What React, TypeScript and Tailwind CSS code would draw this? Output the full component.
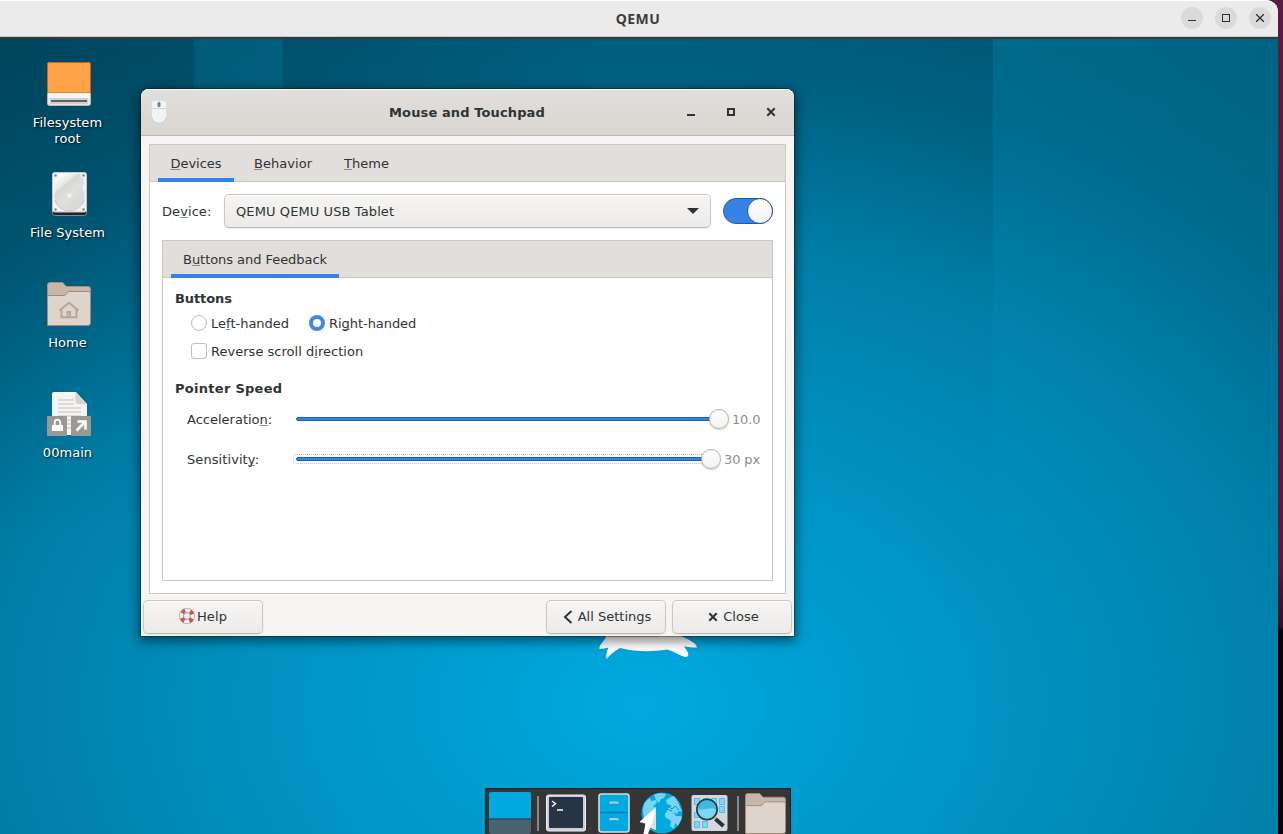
import React from "react";

function U({ children }: { children: React.ReactNode }) {
  return (
    <span className="underline decoration-[#8b8e8f] decoration-1 underline-offset-[1px] [text-decoration-skip-ink:none]">
      {children}
    </span>
  );
}

function DriveIcon() {
  return (
    <svg width="44" height="44" viewBox="0 0 44 44">
      <rect x="0.5" y="0.5" width="43" height="43" rx="2" fill="#e9e7e4" stroke="#b9b5b0" />
      <path d="M.5 31V2.500a2 2 0 0 1 2-2h39a2 2 0 0 1 2 2V31z" fill="#ffa348" stroke="#d4600f" />
      <rect x="1" y="31" width="42" height="5" fill="#f6f5f4" />
      <rect x="3" y="36" width="38" height="6" fill="#d3d0cc" />
      <rect x="4" y="38" width="36" height="2" fill="#5e5c6e" />
    </svg>
  );
}

function DiskIcon() {
  return (
    <svg width="44" height="44" viewBox="0 0 44 44">
      <defs>
        <linearGradient id="disk" x1="0" y1="0" x2="0.7" y2="1">
          <stop offset="0.1" stopColor="#fcfcfc" />
          <stop offset="0.32" stopColor="#e9e9e7" />
          <stop offset="0.38" stopColor="#d6d6d2" />
          <stop offset="0.6" stopColor="#dfdfdc" />
          <stop offset="1" stopColor="#d8d8d4" />
        </linearGradient>
      </defs>
      <rect x="5.5" y="4" width="34" height="39.5" rx="2" fill="#241f31" stroke="#8a8782" />
      <rect x="5.5" y="0.5" width="34" height="39.500" rx="2" fill="#f1f1ef" stroke="#c9c7c3" />
      <path d="M12 2h21c0 4 4 4 4 8s-2 4-1 7a15 14.500 0 1 1-27 0c1-3-1-3-1-7s4-4 4-8z" fill="url(#disk)" />
      <path d="M8 28a15 14.500 0 0 0 29 0" fill="none" stroke="#c0c0bb" />
      <circle cx="22.500" cy="23.500" r="2.200" fill="#f3f3f1" />
      <g fill="#888"><circle cx="8.500" cy="3.500" r="1.200" /><circle cx="36.500" cy="3.500" r="1.200" /><circle cx="8.500" cy="37.500" r="1.200" /><circle cx="36.500" cy="37.500" r="1.200" /></g>
    </svg>
  );
}

function FolderIcon({ home = false, className = "" }: { home?: boolean; className?: string }) {
  return (
    <svg width="44" height="44" viewBox="0 0 44 44" className={className}>
      <path d="M.5 42V3a2.500 2.500 0 0 1 2.500-2.500h12c2 0 3 4 5 4h21A2.500 2.500 0 0 1 43.500 7v34z" fill="#c8b7a9" stroke="#a58f80" />
      <path d="M.5 43.500V15a1.500 1.500 0 0 1 1.500-1.500h15c2 0 3-4 5-4h19.500a2 2 0 0 1 2 2V41a2.500 2.500 0 0 1-2.500 2.500z" fill="#ded4cb" stroke="#a08a7b" />
      {home && (
        <path d="M12.500 28.500l9.500-7.800 9.500 7.800M14.500 27v8.300h15V27M20.500 35v-5h2.500v5" fill="none" stroke="#b8a597" strokeWidth="1.900" />
      )}
    </svg>
  );
}

function DocIcon() {
  return (
    <svg width="44" height="44" viewBox="0 0 44 44">
      <path d="M5 43V2a2 2 0 0 1 2-2h22l11 12v31z" fill="#f6f5f4" />
      <path d="M28.500.500L39.500 12h-9a2 2 0 0 1-2-2z" fill="#d6d3cf" />
      <path d="M11 8h16M11 12h16M11 16h23M11 20h23M11 24h23M11 28h23M11 32h23M11 36h23" stroke="#d3d1ce" strokeWidth="1.600" />
      <rect x="0" y="24" width="20" height="20" rx="1" fill="#9a9996" />
      <rect x="24" y="24" width="20" height="20" rx="1" fill="#9a9996" />
      <rect x="5" y="33" width="11" height="6" rx="0.500" fill="#fff" />
      <path d="M7.700 33v-2.500a2.800 2.800 0 0 1 5.600 0V33" fill="none" stroke="#fff" strokeWidth="1.800" />
      <path d="M29.500 38.500l8-8M30.500 29.500h8v8" fill="none" stroke="#fff" strokeWidth="2.600" />
    </svg>
  );
}

function DesktopItem({ icon, children }: { icon: React.ReactNode; children: React.ReactNode }) {
  return (
    <div className="flex h-[110px] w-[110px] flex-col items-center text-center">
      <div className="ml-[3px] h-[44px]">{icon}</div>
      <div className="ml-px mt-[9px] text-[13px] leading-[16px] tracking-[0.05px] text-white [text-shadow:1px_1px_2px_rgba(0,0,0,0.9)]">{children}</div>
    </div>
  );
}

function MouseIcon() {
  return (
    <svg width="16" height="24" viewBox="0 0 16 24">
      <path d="M.5 3a2.500 2.500 0 0 1 2.500-2.500h10A2.500 2.500 0 0 1 15.500 3v13a7.500 7 0 0 1-15 0z" fill="#f1f3f5" stroke="#dce0e4" />
      <path d="M.5 8.500h15M8 .5v8" stroke="#d0d6db" fill="none" />
      <path d="M1 18a7 6 0 0 0 14 0" stroke="#c4cdd5" fill="none" />
      <rect x="6.500" y="2" width="3" height="5" rx="1.500" fill="#70808b" />
    </svg>
  );
}

function WmIcon({ kind }: { kind: "min" | "max" | "close" }) {
  return (
    <svg width="12" height="12" viewBox="0 0 12 12" fill="none" stroke="#2e3436" strokeWidth="2">
      {kind === "min" && <path d="M2 9h8" />}
      {kind === "max" && <rect x="3" y="3" width="6" height="6" />}
      {kind === "close" && <path d="M2.300 2.300l7.400 7.400M9.700 2.300l-7.400 7.400" />}
    </svg>
  );
}

function HelpIcon() {
  return (
    <svg width="16" height="16" viewBox="0 0 16 16" fill="none" className="-mt-[2px]">
      <circle cx="8" cy="8" r="5.500" stroke="#aaa9a5" strokeWidth="5" />
      <circle cx="8" cy="8" r="5.500" stroke="#f4f3f1" strokeWidth="3.500" />
      <circle cx="8" cy="8" r="5.600" stroke="#e5484d" strokeWidth="4" strokeDasharray="3.600 5.196" strokeDashoffset="-2.600" />
      <circle cx="8" cy="8" r="3.500" stroke="#999" strokeWidth="0.700" />
    </svg>
  );
}

function PushButton({ children }: { children: React.ReactNode }) {
  return (
    <div className="flex h-[34px] w-[120px] items-center justify-center rounded-[5px] border border-[#cdc7c2] border-b-[#bfb8b1] bg-linear-to-b from-[#f6f5f4] to-[#edebe9] shadow-[inset_0_1px_0_#fff,0_1px_2px_rgba(0,0,0,0.07)]">
      {children}
    </div>
  );
}

function Knob() {
  return (
    <span className="z-10 -ml-[10px] box-border h-[20px] w-[20px] shrink-0 rounded-full border border-[#b8b0a8] bg-linear-to-b from-white to-[#f3f2f1] shadow-[0_1px_2px_rgba(0,0,0,0.2)]" />
  );
}

function Track() {
  return <span className="h-[4px] w-full rounded-[2px] border border-[#185fb4] bg-[#3584e4]" />;
}

function MouseSettings() {
  return (
    <div className="absolute left-[141px] top-[89px] flex h-[547px] w-[653px] flex-col rounded-t-[8px] bg-[#f6f5f4] text-[13px] text-[#2e3436] shadow-[0_0_0_1px_rgba(0,0,0,0.3),0_3px_12px_2px_rgba(0,0,0,0.5)]">
      <header className="flex h-[47px] items-center rounded-t-[8px] border-b border-[#bfb8b1] bg-linear-to-b from-[#e1dedb] to-[#dad6d2] pl-[10px] pr-[17px] shadow-[inset_0_1px_0_#f8f7f6]">
        <span className="w-[104px]"><MouseIcon /></span>
        <h1 className="flex-1 pt-[2px] text-center font-bold tracking-[0.12px]">Mouse and Touchpad</h1>
        <span className="flex w-[98px] justify-end gap-[28px]">
          <WmIcon kind="min" /><WmIcon kind="max" /><WmIcon kind="close" />
        </span>
      </header>
      <section className="mx-[8px] mt-[8px] flex h-[450px] flex-col border border-[#cdc7c2] bg-white">
        <nav className="flex h-[37px] shrink-0 gap-[8px] border-b border-[#cdc7c2] bg-[#e1dedb] px-[8px]">
          <span className="flex h-[37px] w-[76px] items-center justify-center border-b-4 border-[#3584e4] pt-[5px]"><span><U>D</U>evices</span></span>
          <span className="flex h-[36px] w-[82px] items-center justify-center pt-[2px]"><span className="tracking-[0.05px]"><U>B</U>ehavior</span></span>
          <span className="flex h-[36px] w-[69px] items-center justify-center pt-[2px]"><span><U>T</U>heme</span></span>
        </nav>
        <div className="flex flex-1 flex-col px-[12px] py-[12px]">
          <div className="flex h-[34px] items-center">
            <span className="w-[62px] pt-[2px] tracking-[0.08px]">De<U>v</U>ice:</span>
            <div className="flex h-[34px] w-[487px] items-center justify-between rounded-[5px] border border-[#cdc7c2] border-b-[#bfb8b1] bg-linear-to-b from-[#f6f5f4] to-[#edebe9] pl-[11px] pr-[11px] shadow-[inset_0_1px_0_#fff,0_1px_2px_rgba(0,0,0,0.07)]">
              <span className="pt-[2px] tracking-[0.1px]">QEMU QEMU USB Tablet</span>
              <svg width="12" height="6" viewBox="0 0 12 6"><path d="M0 0h12L6 6z" fill="#2e3436" /></svg>
            </div>
            <span className="ml-[12px] flex h-[26px] w-[50px] justify-end rounded-full border border-[#185fb4] bg-[#3584e4]">
              <span className="-mr-px -mt-px h-[26px] w-[26px] rounded-full border border-[#185fb4] bg-linear-to-b from-white to-[#f3f2f1]" />
            </span>
          </div>
          <section className="mt-[12px] flex h-[341px] flex-col border border-[#cdc7c2] bg-white">
            <nav className="flex h-[37px] shrink-0 border-b border-[#cdc7c2] bg-[#e1dedb] px-[8px]">
              <span className="flex h-[37px] w-[168px] items-center justify-center border-b-4 border-[#3584e4] pt-[5px]"><span className="tracking-[-0.05px]">B<U>u</U>ttons and Feedback</span></span>
            </nav>
            <div className="flex flex-col px-[12px] pt-[8px]">
              <h2 className="flex h-[24px] items-center pt-[2px] font-bold tracking-[-0.1px]">Buttons</h2>
              <div className="flex h-[26px] items-center pl-[16px]">
                <span className="mr-[4px] h-[16px] w-[16px] rounded-full border border-[#c4bdb6]" />
                <span className="w-[98px] pt-[2px]">Le<U>f</U>t-handed</span>
                <span className="mr-[4px] h-[16px] w-[16px] rounded-full border-4 border-[#3d8ae6]" />
                <span className="pt-[2px] tracking-[-0.05px]">Ri<U>g</U>ht-handed</span>
              </div>
              <div className="flex h-[30px] items-center pl-[16px]">
                <span className="mr-[4px] h-[16px] w-[16px] rounded-[3px] border border-[#c4bdb6]" />
                <span className="pt-[2px] tracking-[0.02px]">Reverse scroll d<U>i</U>rection</span>
              </div>
              <h2 className="mt-[10px] flex h-[24px] items-center pt-[2px] font-bold tracking-[0.28px]">Pointer Speed</h2>
              <div className="flex h-[38px] items-center pl-[12px]">
                <span className="w-[109px] shrink-0 pt-[2px]">Acceleratio<U>n</U>:</span>
                <span className="flex w-[433px] shrink-0 items-center"><Track /><Knob /></span>
                <span className="ml-[3px] whitespace-nowrap pt-[2px] tracking-[-0.15px] text-[#8b8e8f]">10.0</span>
              </div>
              <div className="flex h-[42px] items-center pl-[12px]">
                <span className="w-[106px] shrink-0 pt-[2px] tracking-[0.08px]">Sensitivit<U>y</U>:</span>
                <span className="flex w-[428px] shrink-0 items-center">
                  <span className="flex h-[10px] flex-1 items-center rounded-[4px] border border-dotted border-[#b5b7b7] pl-[2px]"><Track /></span><Knob />
                </span>
                <span className="ml-[3px] whitespace-nowrap pt-[2px] tracking-[-0.1px] text-[#8b8e8f]">30 px</span>
              </div>
            </div>
          </section>
        </div>
      </section>
      <footer className="mt-[6px] flex gap-[6px] px-[2px]">
        <PushButton><HelpIcon /><span className="ml-[2px] tracking-[0.1px]">Help</span></PushButton>
        <span className="flex-1" />
        <PushButton>
          <svg width="10" height="14" viewBox="0 0 10 14" className="-mt-px ml-[2px] mr-[5px]"><path d="M8.500 1L2 7l6.500 6" fill="none" stroke="#2e3436" strokeWidth="2" /></svg>
          <span>All Settings</span>
        </PushButton>
        <PushButton><span className="-mt-px ml-[2px]"><WmIcon kind="close" /></span><span className="ml-[4px] tracking-[0.05px]">Close</span></PushButton>
      </footer>
    </div>
  );
}

function Dock() {
  return (
    <div className="absolute bottom-0 left-[485px] flex h-[46px] w-[306px] items-start border border-b-0 border-[#1f2020] bg-[#353535] pl-[3px] pt-[3px]">
      <svg width="42" height="42" viewBox="0 0 42 42">
        <rect width="42" height="42" rx="2" fill="#4b6271" /><path d="M0 27V2a2 2 0 0 1 2-2h38a2 2 0 0 1 2 2v25z" fill="#00a9df" /><path d="M0 27h42" stroke="#263238" />
      </svg>
      <span className="ml-[6px] mt-[4px] h-[35px] w-[2px] bg-[#888]" />
      <svg width="40" height="38" viewBox="0 0 40 38" className="ml-[7px] mt-[2px]">
        <rect x="0.500" y="1" width="39" height="36" rx="2" fill="#cbd0d6" stroke="#eceff1" />
        <rect x="3" y="3" width="34" height="31" rx="1" fill="#263543" />
        <path d="M6 7l3.500 2.700L6 12.500M11 16h6" fill="none" stroke="#fff" strokeWidth="1.400" />
      </svg>
      <svg width="32" height="40" viewBox="0 0 32 40" className="ml-[12px] mt-px">
        <rect x="1" y="1" width="30" height="38" rx="2.500" fill="#00a9df" stroke="#d0dce2" strokeWidth="1.600" />
        <path d="M2 19.500h28" stroke="#087da9" strokeWidth="1.500" />
        <path d="M12.500 11V9.500h7V11M12.500 27.500V26h7v1.500" fill="none" stroke="#b9c9d1" strokeWidth="1.800" />
      </svg>
      <svg width="44" height="42" viewBox="0 0 44 42" className="ml-[10px]">
        <circle cx="22" cy="21" r="20.500" fill="#00a9df" />
        <g fill="#77d4f4">
          <path d="M4 12C6 9 8 7 10 6l1 3 5-1 1 3-4 3 2 2-3 3 1 4-4 2-2 4-3-3-1-8z" />
          <path d="M14 3c3-2 7-2.500 12-1l-2 4-3 1-2 4-3-3zM26 8l5-3 3-1 4 6 4 10-3-1-2 3-4-2-7 1 2-5 4-2-5-2zM25 21l8-1 3 4 5 0 1 2-4 8-3-3-1 6-4-3 1-5-6-4z" />
        </g>
        <path d="M28 14l4 3 3-3 4 4M27 17l5 2" stroke="#0097c8" fill="none" />
        <path d="M16 15v23l-5.500-2.500L8 42H3.500l2-10.500L-.500 30z" fill="#fff" />
        <path d="M16 15v23l-5-2.500z" fill="#dde1e4" />
      </svg>
      <svg width="38" height="38" viewBox="0 0 38 38" className="ml-[7px] mt-[2px]">
        <rect x="0.500" y="1" width="36" height="36" rx="2" fill="#d3d8df" />
        <g fill="#86d4f0" stroke="#52bde5">
          <path d="M3.500 4.500h5v6h-5zM12.500 4.500h5v6h-5zM20.500 4.500h5v6h-5zM28.500 4.500h5v6h-5zM28.500 12.500h5v6h-5zM3.500 18.500h5v5h-5zM3.500 27.500h5v6h-5zM11.500 27.500h5v6h-5z" />
        </g>
        <path d="M22.500 22.500l2.500 2.500" stroke="#e8c34d" strokeWidth="3" />
        <path d="M24.500 25l8 7" stroke="#263238" strokeWidth="4" />
        <circle cx="16" cy="15.500" r="10.200" fill="#3fb8e6" stroke="#263742" strokeWidth="1.600" />
        <path d="M7 15.500a9 9 0 0 0 18 0c-4-3-9 0-18 0z" fill="#7ed6f5" />
      </svg>
      <span className="ml-[8px] mt-[4px] h-[35px] w-[2px] bg-[#888]" />
      <FolderIcon className="ml-[6px] mt-px h-[41px] w-[41px]" />
    </div>
  );
}

export default function App() {
  return (
    <div className="relative flex h-[834px] w-[1283px] flex-col overflow-hidden bg-[linear-gradient(#581c43_0px,#541b3e_560px,#350d27_627px,#0b0309_630px)] font-['DejaVu_Sans','Liberation_Sans',sans-serif]">
      <div className="flex h-[39px] w-[1278px] shrink-0 items-start rounded-tr-[12px] border-b-2 border-[#383838] bg-[#ebebeb] shadow-[inset_0_1px_0_#fff,inset_0_-1px_0_#c8c8c8]">
        <span className="w-[135px]" />
        <h1 className="flex-1 pt-[9px] text-center font-['Noto_Sans','Open_Sans',sans-serif] text-[14px] font-bold leading-[20px] tracking-[0.4px] text-[#3d3d3d]">QEMU</h1>
        <div className="flex w-[137px] justify-end gap-[12px] pr-[7px] pt-[7px]">
          <svg width="22" height="22" viewBox="0 0 22 22"><circle cx="11" cy="11" r="11" fill="#dadada" /><path d="M7 13.500h8" stroke="#2e2e2e" /></svg>
          <svg width="22" height="22" viewBox="0 0 22 22"><circle cx="11" cy="11" r="11" fill="#dadada" /><rect x="7.500" y="7.500" width="7" height="7" fill="none" stroke="#2e2e2e" /></svg>
          <svg width="22" height="22" viewBox="0 0 22 22"><circle cx="11" cy="11" r="11" fill="#dadada" /><path d="M7.200 7.200l7.600 7.600M14.800 7.200l-7.600 7.600" stroke="#2e2e2e" strokeWidth="1.300" /></svg>
        </div>
      </div>
      <main className="relative h-[795px] w-[1278px] bg-[radial-gradient(ellipse_600px_500px_at_0px_0px,rgba(0,40,58,0.35),rgba(0,40,58,0)),radial-gradient(ellipse_1400px_1000px_at_640px_665px,#00a9e0_0%,#0098c9_20%,#007fa8_46%,#006080_63%,#00526c_80%,#004a62_100%)]">
        <div className="absolute inset-y-0 left-[194px] w-[89px] bg-[linear-gradient(rgba(0,150,190,0.2),rgba(0,150,190,0.09)_70%,rgba(0,150,190,0.07))]" />
        <div className="absolute inset-y-0 right-0 left-[993px] bg-[linear-gradient(rgba(0,150,195,0.25),rgba(0,150,195,0.15)_50%,rgba(0,150,195,0.08))]" />
        <div className="flex flex-col pl-[12px] pt-[23px]">
          <DesktopItem icon={<DriveIcon />}>Filesystem<br />root</DesktopItem>
          <DesktopItem icon={<DiskIcon />}>File System</DesktopItem>
          <DesktopItem icon={<FolderIcon home />}>Home</DesktopItem>
          <DesktopItem icon={<DocIcon />}>00main</DesktopItem>
        </div>
        <svg width="104" height="40" viewBox="0 0 104 40" className="absolute left-[596px] top-[584px]">
          <path d="M12 0L9.500 15 6 20c-2 2-3 4-2.500 6 3 0 6-1 9-1.500-2 4-2.500 8-2 11.500C14 32 18 28 24 25c16 4 32 4 47 1.500 7 2 13 6 18 7.500 3 .5 4-2 3-4-1-3-3-5-4-6.500 4 .5 9 1 13 1-1-5-9-8-16-11.500V0z" fill="#fff" />
        </svg>
      </main>
      <MouseSettings />
      <Dock />
    </div>
  );
}
